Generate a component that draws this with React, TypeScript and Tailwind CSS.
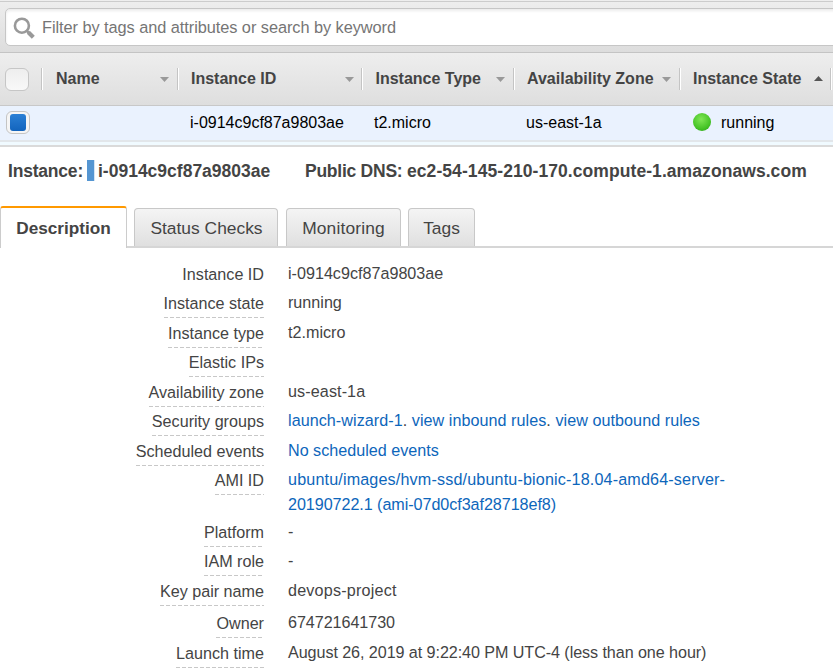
import type { ReactNode } from "react";

type Column = { title: string; width: string; gap: string; pad: string; sorted?: boolean };

const columns: Column[] = [
  { title: "Name", width: "w-[136px]", gap: "pr-[8px]", pad: "pl-[14px]" },
  { title: "Instance ID", width: "w-[184px]", gap: "pr-[7px]", pad: "pl-[13px]" },
  { title: "Instance Type", width: "w-[152px]", gap: "pr-[8px]", pad: "pl-[13.5px]" },
  { title: "Availability Zone", width: "w-[166px]", gap: "pr-[8px]", pad: "pl-[13px]" },
  { title: "Instance State", width: "w-[151px]", gap: "pr-[7px]", pad: "pl-[13px]", sorted: true },
];

function Link({ children }: { children: ReactNode }) {
  return <a className="text-[#0d66bb]">{children}</a>;
}

type Detail = { label: string; height: string; plain?: boolean; value: ReactNode };

const details: Detail[] = [
  { label: "Instance ID", height: "h-[29px]", plain: true, value: "i-0914c9cf87a9803ae" },
  { label: "Instance state", height: "h-[30px]", value: "running" },
  { label: "Instance type", height: "h-[29px]", value: "t2.micro" },
  { label: "Elastic IPs", height: "h-[30px]", value: "" },
  { label: "Availability zone", height: "h-[29px]", value: <span className="tracking-[0.1px]">us-east-1a</span> },
  {
    label: "Security groups",
    height: "h-[30px]",
    value: (
      <span className="tracking-[0.05px]">
        <Link>launch-wizard-1</Link>. <Link>view inbound rules</Link>. <Link>view outbound rules</Link>
      </span>
    ),
  },
  { label: "Scheduled events", height: "h-[29px]", value: <Link>No scheduled events</Link> },
  {
    label: "AMI ID",
    height: "h-[52px]",
    value: (
      <Link>
        <span className="tracking-[0.15px]">ubuntu/images/hvm-ssd/ubuntu-bionic-18.04-amd64-server-</span>
        <br />
        <span className="tracking-[-0.06px]">20190722.1 (ami-07d0cf3af28718ef8)</span>
      </Link>
    ),
  },
  { label: "Platform", height: "h-[29px]", value: "-" },
  { label: "IAM role", height: "h-[30px]", value: "-" },
  { label: "Key pair name", height: "h-[32px]", value: <span className="tracking-[0.2px]">devops-project</span> },
  { label: "Owner", height: "h-[30px]", value: <span className="tracking-[-0.06px]">674721641730</span> },
  {
    label: "Launch time",
    height: "h-[24px]",
    value: (
      <span className="tracking-[-0.075px]">August 26, 2019 at 9:22:40 PM UTC-4 (less than one hour)</span>
    ),
  },
];

function SearchIcon() {
  return (
    <svg width="22" height="22" viewBox="0 0 22 22" fill="none" stroke="#999" className="mt-[2px]">
      <circle cx="8.9" cy="8.7" r="7" strokeWidth="2.6" />
      <path d="M14 14l1.8 1.8" strokeWidth="2.6" />
      <path d="M15.3 15.3l5 5" strokeWidth="4.2" />
    </svg>
  );
}

function SortArrow({ up }: { up?: boolean }) {
  return (
    <svg width="9" height="5" viewBox="0 0 9 5" className={up ? "mb-[2px]" : ""}>
      {up ? <path d="M0 5L4.5 0L9 5Z" fill="#555" /> : <path d="M0 0H9L4.5 5Z" fill="#999" />}
    </svg>
  );
}

function Tab({ children, width }: { children: ReactNode; width: string }) {
  return (
    <div
      className={`${width} mt-px flex h-[38px] items-center justify-center rounded-t-[4px] border border-b-0 border-[#c8c8c8] bg-linear-to-b from-[#f4f4f4] to-[#e0e0e0] pt-px`}
    >
      {children}
    </div>
  );
}

export default function App() {
  return (
    <div className="h-[668px] w-[833px] overflow-hidden bg-white font-['Liberation_Sans',Arial,sans-serif] text-[16px] text-[#444]">
      <div className="flex h-[53px] items-start overflow-hidden border-b border-[#c4c4c4] bg-linear-to-b from-[#eee] to-[#ddd]">
        <div className="h-[53px] w-full border-t border-[#eee]">
          <div className="h-full border-t border-[#ccc] pt-[6px] pl-[5px]">
            <div className="flex h-[38px] w-[840px] items-center rounded-[5px] border border-[#c6c6c6] bg-white pl-[7px] shadow-[inset_0_2px_3px_rgba(0,0,0,0.08)]">
              <SearchIcon />
              <span className="pl-[7px] text-[16.35px] tracking-[-0.06px] whitespace-nowrap text-[#757575]">
                Filter by tags and attributes or search by keyword
              </span>
            </div>
          </div>
        </div>
      </div>

      <div className="flex h-[53px] items-center border-b border-[#c8c8c8] bg-linear-to-b from-[#eee] to-[#dedede]">
        <div className="w-[41px] shrink-0 pl-[5px]">
          <div className="h-[23px] w-[24px] rounded-[6px] border border-[#c6c6c6] bg-linear-to-b from-[#eee] to-[#f8f8f8]" />
        </div>
        {columns.map((c) => (
          <div
            key={c.title}
            className={`${c.width} ${c.gap} flex h-[22px] shrink-0 items-center justify-between border-l border-[#c4c4c4] font-bold shadow-[inset_1px_0_0_#fff]`}
          >
            <span className={`${c.pad} whitespace-nowrap`}>{c.title}</span>
            <SortArrow up={c.sorted} />
          </div>
        ))}
        <div className="h-[22px] w-[3px] border-l border-[#c4c4c4] shadow-[inset_1px_0_0_#fff]" />
      </div>

      <div className="flex h-[36px] items-center border-b-2 border-[#e2e6ea] bg-[#eaf2fe] text-black">
        <div className="w-[190px] shrink-0 pl-[6px]">
          <div className="-mt-px flex h-[23px] w-[24px] items-center justify-center rounded-[6px] border border-[#c4c4c4] bg-[#f5f5f5]">
            <div className="h-[17px] w-[16px] rounded-[3px] bg-linear-to-b from-[#2b80d5] to-[#1264bd]" />
          </div>
        </div>
        <span className="w-[184px] shrink-0">i-0914c9cf87a9803ae</span>
        <span className="w-[152px] shrink-0">t2.micro</span>
        <span className="w-[167px] shrink-0">us-east-1a</span>
        <div className="-mt-[2px] mr-[10px] h-[18px] w-[18px] shrink-0 rounded-full bg-[radial-gradient(circle_at_45%_35%,#80e655,#46c427_60%,#229c11)]" />
        <span>running</span>
      </div>
      <div className="h-[5px] border-b-2 border-[#dadada] bg-[#f0faff]" />

      <div className="flex h-[59px] items-start pt-[14px] pl-[8px] text-[17.5px] leading-[21px] font-bold whitespace-nowrap">
        <span className="w-[79px] tracking-[-0.2px]">Instance:</span>
        <span className="-mt-px h-[21px] w-[8px] border-r border-[#d5e5f4] bg-[#5596d2]" />
        <span className="w-[210px] pl-[3px]">i-0914c9cf87a9803ae</span>
        <span className="tracking-[-0.25px]">Public DNS:&nbsp;</span>
        <span className="tracking-[0.07px]">ec2-54-145-210-170.compute-1.amazonaws.com</span>
      </div>

      <div className="flex h-[42px] items-end text-[17.4px]">
        <div className="flex h-[42px] w-[127px] items-center justify-center rounded-t-[3px] border-x border-t-2 border-x-[#ccc] border-t-[#f90] bg-white pt-[2px] text-[17.2px] font-bold">
          Description
        </div>
        <div className="flex h-[41px] flex-1 border-b-2 border-[#d6d6d6] pl-[7px]">
          <Tab width="w-[144px]">
            <span className="pl-px">Status Checks</span>
          </Tab>
          <div className="w-[8px]" />
          <Tab width="w-[115px]">
            <span className="tracking-[0.15px]">Monitoring</span>
          </Tab>
          <div className="w-[7px]" />
          <Tab width="w-[67px]">Tags</Tab>
        </div>
      </div>

      <div className="pt-[17px] text-[16.15px]">
        {details.map((d) => (
          <div key={d.label} className={`${d.height} flex items-start whitespace-nowrap`}>
            <div className="flex w-[264px] shrink-0 justify-end">
              <div className="flex h-[24px] flex-col">
                <span className="h-[23px] leading-[19px]">{d.label}</span>
                {!d.plain && (
                  <span className="h-px bg-[repeating-linear-gradient(to_right,#c8c8c8_0,#c8c8c8_4px,transparent_4px,transparent_6px)]" />
                )}
              </div>
            </div>
            <div className="-mt-[4px] pl-[24px] leading-[25px]">{d.value}</div>
          </div>
        ))}
      </div>
    </div>
  );
}
